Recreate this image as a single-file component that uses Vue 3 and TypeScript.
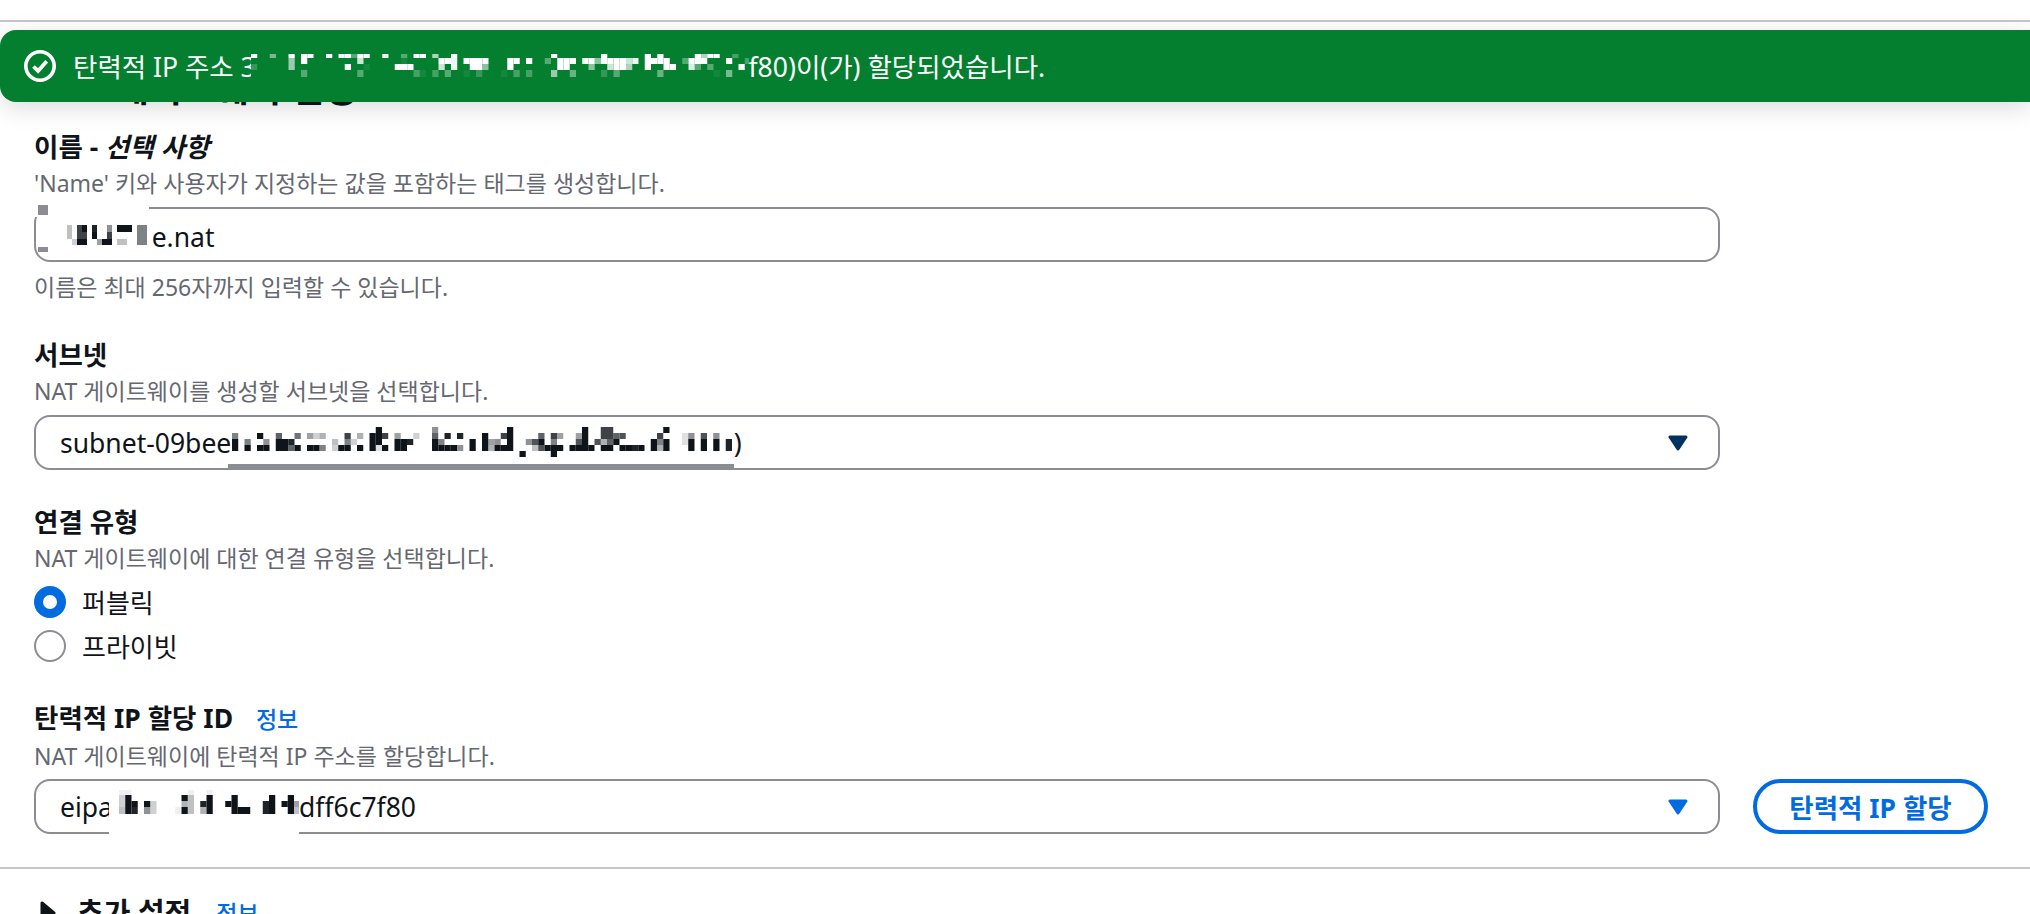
<template>
  <div class="page">
    <div class="top-line"></div>

    <div class="flash">
      <svg class="flash-icon" width="32" height="32" viewBox="0 0 32 32" fill="none">
        <circle cx="16" cy="16" r="14.2" stroke="#fff" stroke-width="3.6" />
        <path d="M9.5 16.5l4.6 4.4 8.6-9.6" stroke="#fff" stroke-width="3.8" />
      </svg>
      <span class="flash-text flash-lead">탄력적 IP 주소 3</span>
      <svg class="mosaic" width="498" height="23">
        <rect width="498" height="23" fill="#037f2f" />
        <rect v-for="(c, i) in flashCells" :key="i" :x="c.x" :y="c.y" :width="c.w" :height="c.h" fill="#fff" :fill-opacity="c.a" />
      </svg>
      <span class="flash-text">f80)이(가) 할당되었습니다.</span>
    </div>

    <main class="form">
      <h2 class="title">NAT 게이트웨이 설정</h2>

      <section class="field field-name">
        <div class="label">이름 - <i>선택 사항</i></div>
        <div class="desc">'Name' 키와 사용자가 지정하는 값을 포함하는 태그를 생성합니다.</div>
        <div class="control">
          <span class="patch patch-name"></span>
          <span class="speck speck-a"></span>
          <span class="speck speck-b"></span>
          <svg class="mosaic name-mosaic" width="85" height="20">
            <rect v-for="(c, i) in nameCells" :key="i" :x="c.x" :y="c.y" :width="c.w" :height="c.h" fill="#0f141a" :fill-opacity="c.a" />
          </svg>
          <span class="name-text">e.nat</span>
        </div>
        <div class="hint">이름은 최대 256자까지 입력할 수 있습니다.</div>
      </section>

      <section class="field">
        <div class="label">서브넷</div>
        <div class="desc">NAT 게이트웨이를 생성할 서브넷을 선택합니다.</div>
        <div class="control">
          <span class="subnet-bar"></span>
          <span class="subnet-text">subnet-09bee</span>
          <svg class="mosaic" width="502" height="32">
            <rect width="502" height="32" fill="#fff" />
            <rect v-for="(c, i) in subnetCells" :key="i" :x="c.x" :y="c.y" :width="c.w" :height="c.h" fill="#0f141a" :fill-opacity="c.a" />
          </svg>
          <span>)</span>
          <svg class="caret" width="20" height="16" viewBox="0 0 20 16">
            <path d="M2 2h16l-8 12z" fill="#033160" stroke="#033160" stroke-width="3" stroke-linejoin="round" />
          </svg>
        </div>
      </section>

      <section class="field field-type">
        <div class="label">연결 유형</div>
        <div class="desc">NAT 게이트웨이에 대한 연결 유형을 선택합니다.</div>
        <div class="radios">
          <label v-for="opt in connectionTypes" :key="opt" class="radio">
            <span :class="['dot', { checked: opt === '퍼블릭' }]"></span>
            {{ opt }}
          </label>
        </div>
      </section>

      <section class="field field-eip">
        <div class="label">탄력적 IP 할당 ID <a class="info">정보</a></div>
        <div class="desc">NAT 게이트웨이에 탄력적 IP 주소를 할당합니다.</div>
        <div class="control-row">
          <div class="control">
            <span class="patch patch-eip"></span>
            <span class="eip-text">eipa</span>
            <svg class="mosaic" width="190" height="33">
              <rect width="190" height="33" fill="#fff" />
              <rect v-for="(c, i) in eipCells" :key="i" :x="c.x" :y="c.y" :width="c.w" :height="c.h" fill="#0f141a" :fill-opacity="c.a" />
            </svg>
            <span>dff6c7f80</span>
            <svg class="caret" width="20" height="16" viewBox="0 0 20 16">
              <path d="M2 2h16l-8 12z" fill="#006ce0" stroke="#006ce0" stroke-width="3" stroke-linejoin="round" />
            </svg>
          </div>
          <button class="allocate" type="button">탄력적 IP 할당</button>
        </div>
      </section>
    </main>

    <div class="divider"></div>

    <div class="more">
      <svg width="16" height="24" viewBox="0 0 16 24">
        <path d="M2 2l12 10-12 10z" fill="#0f141a" stroke="#0f141a" stroke-width="3" stroke-linejoin="round" />
      </svg>
      <span class="more-title">추가 설정</span>
      <a class="info">정보</a>
    </div>
  </div>
</template>

<script setup lang="ts">
interface Cell {
  x: number;
  y: number;
  w: number;
  h: number;
  a: number;
}

// the redacted parts of the screenshot: one string per row, one hex digit of opacity per block
function toCells(rows: string[], rowY: number[], pitch: number, offset = 0): Cell[] {
  const cells: Cell[] = [];
  rows.forEach((row, r) => {
    [...row].forEach((ch, k) => {
      if (ch === '.') return;
      cells.push({
        x: offset + k * pitch,
        y: rowY[r],
        w: pitch,
        h: rowY[r + 1] - rowY[r],
        a: parseInt(ch, 16) / 15,
      });
    });
  });
  return cells;
}

const flashY = [0, 4, 10, 16, 23];

const flashCells = [
  ...toCells(
    [
      'f..7..f.ff..f.ff5ff..e..5.ff.a..f',
      '......9.f........c......1.....ffe.ffff',
      '3.....9........f..1....fff....c.e..ff8',
      '........5........5........41.4.5..1.3...1',
    ],
    flashY,
    6.25
  ),
  ...toCells(
    [
      '.......f.......f......f.f.....faff..4',
      'ff.f..5.fff.ff8ffffce.ffff..5fff...f..4',
      'f.......ff...8..cffa..f..ff..d5.5....f',
      '.4.4...9..6....3.5......6........1.7',
    ],
    flashY,
    6.25,
    41 * 6.25
  ),
];

const nameCells = toCells(
  ['4.cf.e..7.fff.88', '4.cc.f..c.....88', '.3ff..6ff.44..88'],
  [0, 7, 14, 20],
  5
);

const subnetCells = toCells(
  [
    '.......................f........7...........f...........f..cc........f',
    '8...f..a..9.635...c.5.ffc.6..3..a.e.e...f..cf....a.c6..6f..ccab.....c...27.b.7',
    'f.8..7.ffe......4.83..ff..ffe...f8....f.f67.f..7bf.8...bf.b5af.....f8f..2f.f.f.e',
    'f.f.ff.ffaf.ff8.3ff.f.f2f.ff....ffff7.f.f5fff...4bfff.ffff.ff.ffef.f5f...f.f.f.e',
    '..............................................f....f',
  ],
  [0, 6, 12, 18, 24, 30],
  6.25
);

const eipCells = toCells(
  [
    '11.........1..1',
    '3f........f4..f...f.....f..f',
    '3ff.f3....54.ef..ff....ef.ff6',
    '4fe.73...1f4.5f...fff..ef..f4',
  ],
  [0, 5, 11, 17, 24],
  6.25,
  10
);

const connectionTypes = ['퍼블릭', '프라이빗'];
</script>

<style>
html,
body {
  margin: 0;
  background: #fff;
}
</style>

<style scoped>
.page {
  position: relative;
  height: 914px;
  overflow: hidden;
  background: #fff;
  color: #0f141a;
  font-family: 'Noto Sans', 'Noto Sans CJK KR', sans-serif;
  font-size: 26.5px;
}
.top-line {
  position: absolute;
  top: 20px;
  left: 0;
  right: 0;
  height: 2px;
  background: #c6c6cd;
}

.flash {
  position: absolute;
  top: 30px;
  left: 0;
  right: 0;
  z-index: 2;
  height: 72px;
  display: flex;
  align-items: center;
  padding-left: 24px;
  padding-bottom: 1px;
  box-sizing: border-box;
  background: #037f2f;
  border-radius: 16px 0 0 16px;
  box-shadow: 0 6px 24px rgba(0, 7, 22, 0.14);
  color: #fff;
}
.flash-icon {
  flex: none;
  margin-right: 17px;
}
.flash-text {
  white-space: nowrap;
}
.flash-lead {
  width: 177.5px;
  flex: none;
}
.mosaic {
  flex: none;
  display: block;
}

.form {
  padding: 69px 0 0 34px;
}
.title {
  margin: 0;
  font-size: 36px;
  line-height: 40px;
  font-weight: 700;
  white-space: nowrap;
}
.field {
  margin-top: 32px;
}
.field-name {
  margin-top: 20px;
}
.field-type {
  margin-top: 34px;
}
.label {
  line-height: 36px;
  font-weight: 700;
}
.desc,
.hint {
  font-size: 23px;
  line-height: 36px;
  color: #656871;
}
.hint {
  margin-top: 7px;
}
.control {
  position: relative;
  box-sizing: border-box;
  width: 1686px;
  height: 55px;
  margin-top: 6px;
  display: flex;
  align-items: center;
  padding: 0 30px 0 24px;
  border: 2px solid #8c8c94;
  border-radius: 16px;
  white-space: nowrap;
}
.caret {
  margin-left: auto;
  flex: none;
}

.patch {
  position: absolute;
  background: #fff;
}
.patch-name {
  top: -6px;
  left: -6px;
  width: 119px;
  height: 14px;
}
.speck {
  position: absolute;
  background: #8c8c94;
}
.speck-a {
  top: -4px;
  left: 2px;
  width: 10px;
  height: 10px;
}
.speck-b {
  top: 38px;
  left: 2px;
  width: 10px;
  height: 5px;
}
.name-mosaic {
  margin-left: 6.67px;
}
.name-text {
  padding-top: 4px;
}
.subnet-bar {
  position: absolute;
  left: 192px;
  bottom: -2px;
  width: 506px;
  height: 6px;
  background: #8c8c94;
}
.subnet-text {
  width: 171.67px;
  flex: none;
}
.patch-eip {
  left: 73px;
  bottom: -4px;
  width: 190px;
  height: 6px;
}
.eip-text {
  width: 49px;
  flex: none;
}

.radios {
  margin-top: 4px;
}
.radio {
  height: 44px;
  display: flex;
  align-items: center;
  gap: 16px;
  font-size: 26px;
}
.dot {
  box-sizing: border-box;
  width: 32px;
  height: 32px;
  border: 2px solid #8c8c94;
  border-radius: 50%;
}
.dot.checked {
  border: 9px solid #006ce0;
}

.field-eip {
  margin-top: 32px;
}
.field-eip .desc {
  margin-top: 1px;
}
.info {
  margin-left: 16px;
  font-size: 23px;
  font-weight: 500;
  color: #006ce0;
}
.control-row {
  display: flex;
  gap: 33px;
  align-items: flex-start;
  margin-top: 5px;
}
.control-row .control {
  margin-top: 0;
}
.allocate {
  box-sizing: border-box;
  width: 235px;
  height: 55px;
  padding: 0;
  background: #fff;
  border: 4px solid #006ce0;
  border-radius: 28px;
  color: #006ce0;
  font: inherit;
  font-weight: 700;
}

.divider {
  height: 2px;
  margin-top: 33px;
  background: #c6c6cd;
}
.more {
  display: flex;
  align-items: center;
  margin: 24px 0 0 40px;
  line-height: 40px;
}
.more-title {
  margin-left: 21px;
  font-size: 29px;
  font-weight: 700;
}
.more .info {
  margin-left: 25px;
}
</style>
